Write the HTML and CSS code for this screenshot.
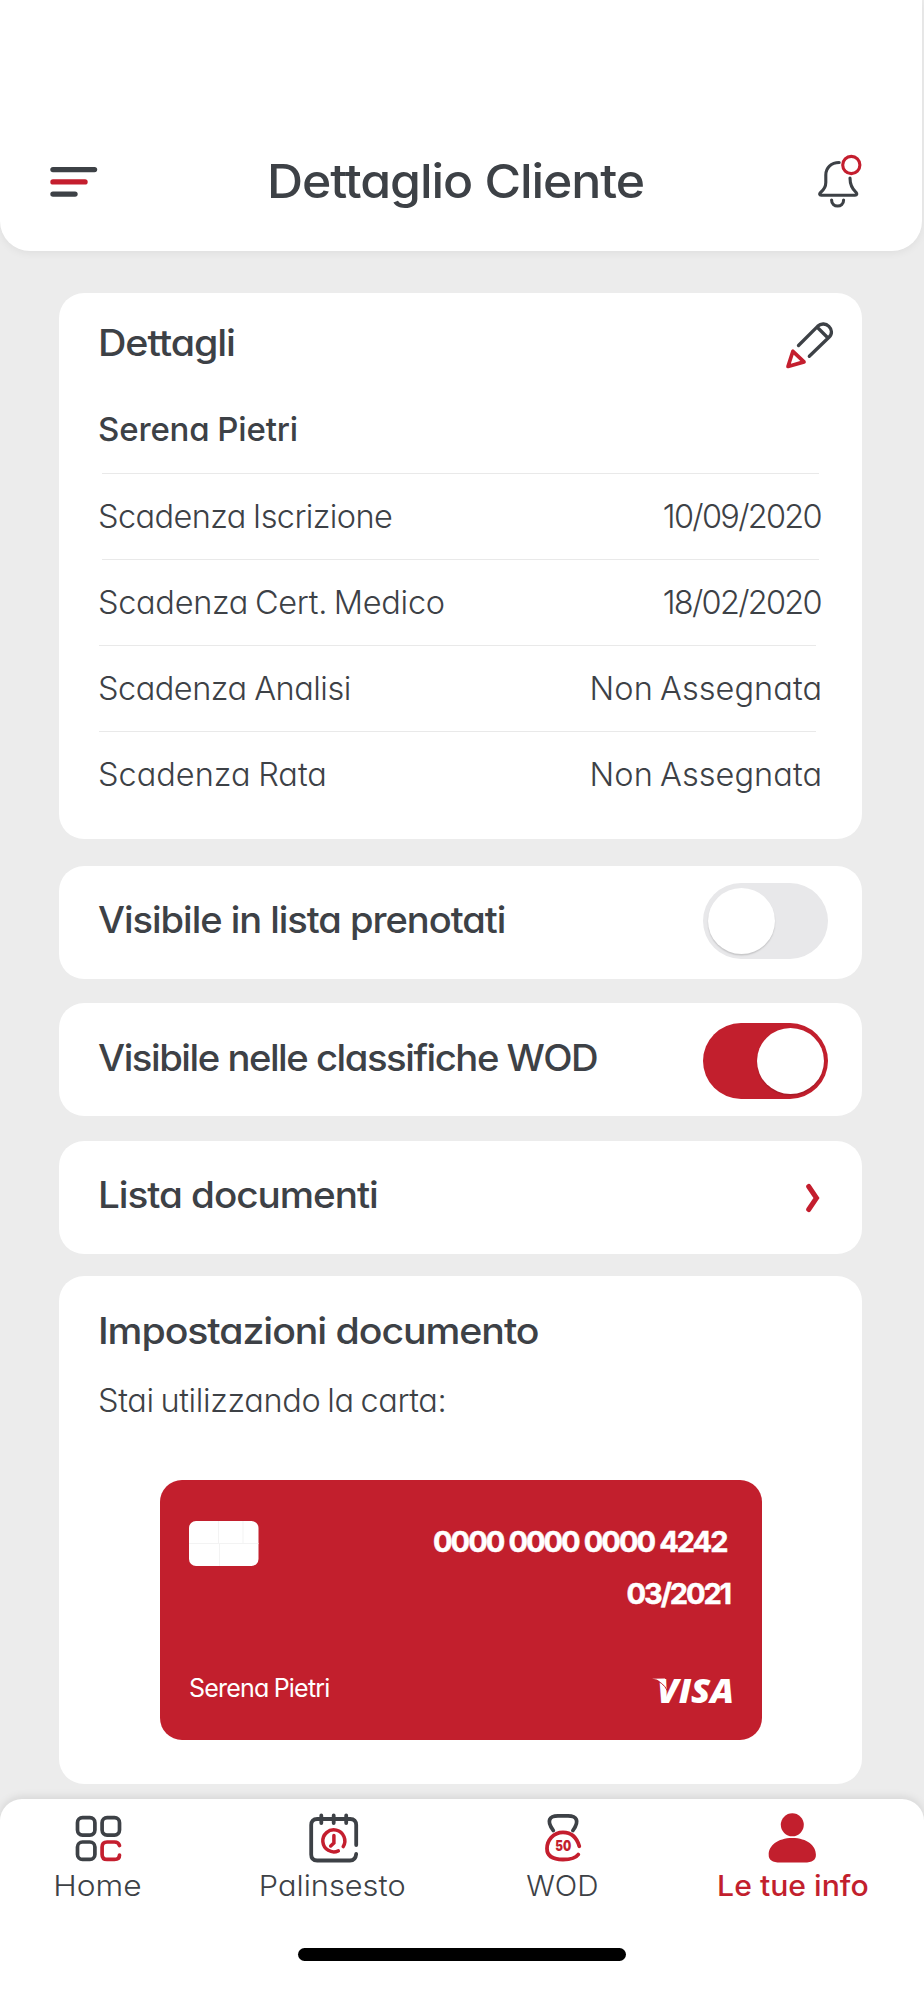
FILE: index.html
```html
<!DOCTYPE html>
<html lang="it">
<head>
<meta charset="utf-8">
<title>Dettaglio Cliente</title>
<link rel="stylesheet" href="styles.css">
</head>
<body>
<div class="screen">
  <header class="topbar">
    <svg class="menu" width="48" height="32" viewBox="0 0 48 32" fill="none" stroke-width="5.4" stroke-linecap="round">
      <path d="M3 4.600H44.5" stroke="#3d4146"/>
      <path d="M3 16.900H35" stroke="#c41e2e"/>
      <path d="M3 29.100H25" stroke="#3d4146"/>
    </svg>
    <h1 class="title"><span class="t-title">Dettaglio Cliente</span></h1>
    <svg class="bell" width="46" height="56" viewBox="0 0 46 56" fill="none" stroke="#3d4146" stroke-width="3.1" stroke-linecap="round" stroke-linejoin="round">
      <path d="M21.2 8.5C13 8.5 7.800 14 7.800 21V28.500C7.800 33.500 5.600 36 2.600 38.500C1 40 1.500 41.300 3.200 41.300H37C39 41.300 39.300 39.800 38 38.300C34.500 35.200 32 32 32 24"/>
      <path d="M13.600 46C13.600 54 25.600 54 25.600 46"/>
      <circle cx="33.300" cy="11" r="8.600" stroke="#c41e2e"/>
    </svg>
  </header>

  <main class="content">
    <section class="card details">
      <div class="details-head">
        <h2 class="heading t-dettagli">Dettagli</h2>
        <svg class="pencil" width="50" height="50" viewBox="0 0 50 50" fill="none" stroke="#3d4146" stroke-width="3.3" stroke-linecap="round" stroke-linejoin="round">
          <path d="M13.500 26.500L32.600 7.300C40 0.200 51.500 11 44 18.300L24.300 37.300M32 8L42.500 18.500"/>
          <path d="M7.900 32.300L3 47.500L19 42.900Z" stroke="#c41e2e" stroke-width="3.700"/>
        </svg>
      </div>
      <div class="row name"><span class="t-name">Serena Pietri</span></div>
      <div class="row"><span class="t-r1">Scadenza Iscrizione</span><span class="t-date">10/09/2020</span></div>
      <div class="row"><span class="t-r2">Scadenza Cert. Medico</span><span class="t-date">18/02/2020</span></div>
      <div class="row"><span class="t-r3">Scadenza Analisi</span><span class="t-na">Non Assegnata</span></div>
      <div class="row"><span class="t-r4">Scadenza Rata</span><span class="t-na">Non Assegnata</span></div>
    </section>

    <section class="card option first">
      <h2 class="heading t-o1">Visibile in lista prenotati</h2>
      <div class="toggle"><div class="knob"></div></div>
    </section>
    <section class="card option">
      <h2 class="heading t-o2">Visibile nelle classifiche WOD</h2>
      <div class="toggle on"><div class="knob"></div></div>
    </section>
    <section class="card option">
      <h2 class="heading t-o3">Lista documenti</h2>
      <svg class="chevron" width="16" height="30" viewBox="0 0 16 30" fill="none" stroke="#c41e2e" stroke-width="5" stroke-linecap="round"><path d="M3.700 3.500L11.500 15L3.700 26.500"/></svg>
    </section>

    <section class="card payment">
      <h2 class="heading t-imp">Impostazioni documento</h2>
      <p class="using"><span class="t-using">Stai utilizzando la carta:</span></p>
      <div class="credit">
        <div class="credit-top">
          <svg class="chip" width="70" height="45" viewBox="0 0 70 45" fill="none" stroke="#f3f3f3"><rect width="69.500" height="45" rx="7" fill="#fff" stroke="none"/><path d="M0 22.500H69.500M29.500 0V22.500M54 0V22.500M30.500 22.500V45"/></svg>
          <div class="numbers">
            <div class="number"><span class="t-num">0000 0000 0000 4242</span></div>
            <div class="expiry"><span class="t-exp">03/2021</span></div>
          </div>
        </div>
        <div class="credit-bottom">
          <span class="holder t-holder">Serena Pietri</span>
          <svg class="visa" width="82" height="28" viewBox="0 0 82 28">
            <text class="visa-text" x="6" y="27.500" textLength="77" lengthAdjust="spacingAndGlyphs">VISA</text>
            <path d="M1 3.700Q11 4 15.500 15.500L14 3.500Z" fill="#fff"/>
            <path d="M2 4.700Q12 6.500 16.500 16" fill="none" stroke="#c21f2d" stroke-width="1"/>
          </svg>
        </div>
      </div>
    </section>
  </main>

  <footer class="tabbar">
    <nav class="tabs">
      <div class="tab w-home">
        <svg class="nudge" width="50" height="50" viewBox="0 0 50 50" fill="none" stroke="#3d4146" stroke-width="3.700" stroke-linecap="round">
          <rect x="4.500" y="4.700" width="17.400" height="17.400" rx="5"/><rect x="29.100" y="4.700" width="17.400" height="17.400" rx="5"/><rect x="4.500" y="29" width="17.400" height="17.400" rx="5"/>
          <path d="M46.500 32.500Q45.500 29 41.500 29H34.100Q29.100 29 29.100 34V41.400Q29.100 46.400 34.100 46.400H41.500Q46.500 46.400 46.500 42" stroke="#c41e2e"/>
        </svg>
        <span class="label t-home">Home</span>
      </div>
      <div class="tab w-pal">
        <svg class="nudge-wide" width="50" height="50" viewBox="0 0 50 50" fill="none" stroke="#3d4146" stroke-width="3.800" stroke-linecap="round">
          <path d="M47.200 32V12Q47.200 6 41.200 6H8.200Q2.200 6 2.200 12V41.500Q2.200 47.500 8.200 47.500H41Q46.500 47.500 47.200 41M12.300 2.500V10M24.700 2.500V10M37.200 2.500V10"/>
          <path d="M34.200 33.600A11 11 0 1 0 29.300 37.900M24.900 22.500V30L21.700 33" stroke="#c41e2e" stroke-width="3.500"/>
        </svg>
        <span class="label t-pal">Palinsesto</span>
      </div>
      <div class="tab w-wod">
        <svg class="nudge" width="50" height="50" viewBox="0 0 50 50" fill="none" stroke="#3d4146" stroke-width="3.800" stroke-linecap="round">
          <path d="M15.300 17.500C8 7.500 11.500 2.900 20 2.900H30C38.500 2.900 42 7.500 34.900 17.500"/>
          <path d="M41.300 33.200C38.500 23.500 33 19.300 25 19.300C15 19.300 9 28 9 35.500C9 43 15 46.500 25 46.500C33 46.500 38 44.800 40.300 41.500" stroke="#c41e2e"/>
          <text class="kettle" x="25.300" y="38" text-anchor="middle" textLength="16" lengthAdjust="spacingAndGlyphs">50</text>
        </svg>
        <span class="label t-wod">WOD</span>
      </div>
      <div class="tab w-info">
        <svg width="50" height="50" viewBox="0 0 50 50" fill="#c21f2d">
          <circle cx="24.300" cy="11.800" r="11.500"/>
          <path d="M0.700 41.500C0.700 33 9.300 25 24.300 25S47.900 33 47.900 41.500Q48.300 49.500 36.300 49.500H12.300Q0.300 49.500 0.700 41.500Z"/>
        </svg>
        <span class="label active t-info">Le tue info</span>
      </div>
    </nav>
    <div class="home-indicator"></div>
  </footer>
</div>
</body>
</html>
```
FILE: styles.css
```css
* { box-sizing: border-box; }
body {
  margin: 0;
  background: #ececec;
  color: #3d4146;
  font-family: Inter, "Open Sans", sans-serif;
  font-feature-settings: "cv11";
}
h1, h2, p { margin: 0; }
svg { display: block; flex: none; overflow: visible; }

.screen {
  width: 924px;
  height: 2000px;
  overflow: hidden;
  display: flex;
  flex-direction: column;
}

.topbar {
  width: 922px;
  height: 251px;
  flex: none;
  padding: 149px 58px 38px 50px;
  display: flex;
  align-items: center;
  background: #fff;
  border-radius: 0 0 30px 30px;
  box-shadow: 0 2px 8px rgba(0, 0, 0, .06);
}
.title {
  flex: 1;
  padding-left: 169px;
  font-size: 47px;
  line-height: 64px;
  font-weight: 500;
  white-space: nowrap;
}
.title span { display: inline-block; }
.bell { margin-top: 2px; }

.content {
  flex: none;
  height: 1548px;
  padding: 41.500px 62px 0 59px;
}
.card {
  background: #fff;
  border-radius: 25px;
  padding: 0 34px 0 39px;
}
.heading {
  font-size: 36.500px;
  font-weight: 500;
  line-height: 46px;
  letter-spacing: -1px;
  white-space: nowrap;
  transform-origin: 0 50%;
}

.details { height: 546px; padding: 6px 41px 0 39px; }
.details-head {
  height: 88.500px;
  display: flex;
  align-items: center;
  justify-content: space-between;
}
.pencil { margin: 3px -14px 0 0; }
.row {
  height: 86px;
  display: flex;
  align-items: center;
  justify-content: space-between;
  font-size: 32.500px;
  font-weight: 300;
  white-space: nowrap;
  background: linear-gradient(#e9e9e9, #e9e9e9) 4px 100% / 717px 1px no-repeat;
}
.row:nth-child(4), .row:nth-child(5) { background-position: 1px 100%; }
.row:last-child { background: none; }
.row.name { height: 87px; margin-bottom: -.5px; padding-bottom: 3px; font-size: 33px; font-weight: 500; background-position: 4px 100%; }

.option {
  height: 113px;
  margin-top: 24.700px;
  display: flex;
  align-items: center;
  justify-content: space-between;
  padding-bottom: 4px;
}
.option.first { margin-top: 27px; }
.toggle {
  width: 125px;
  height: 76px;
  padding: 5.500px 4.500px;
  display: flex;
  border-radius: 38px;
  background: #e8e8ea;
}
.option.first .toggle { margin-top: 1px; }
.toggle.on { justify-content: flex-end; background: #c21f2d; margin-top: 6px; }
.knob {
  width: 67px;
  height: 66px;
  border-radius: 50%;
  background: #fff;
  box-shadow: 0 1.500px 1.500px rgba(0, 0, 0, .15);
}
.chevron { margin: 5px 7px 0 0; }

.payment { height: 508px; margin-top: 22.500px; padding-top: 31.500px; }
.using {
  margin-top: 24px;
  font-size: 32.500px;
  line-height: 46px;
  font-weight: 300;
  white-space: nowrap;
}
.credit {
  width: 602px;
  height: 260px;
  margin: 56px 0 0 62px;
  padding: 41px 29px 37px;
  display: flex;
  flex-direction: column;
  justify-content: space-between;
  border-radius: 22px;
  background: #c21f2d;
  color: #fff;
}
.credit-top, .credit-bottom { display: flex; justify-content: space-between; }
.credit-bottom { align-items: flex-end; }
.numbers {
  font-size: 29px;
  font-weight: 700;
  line-height: 52px;
  margin-top: -4.500px;
  text-align: right;
  white-space: nowrap;
  -webkit-text-stroke: .5px #fff;
}
.number { padding-right: 6.500px; }
.expiry { padding-right: 3px; }
.holder { font-size: 25px; line-height: 30px; }
.visa-text { font: italic 800 34px "Open Sans", sans-serif; fill: #fff; }

.tabbar {
  height: 201px;
  flex: none;
  padding: 14px 56px 0 55px;
  background: #fff;
  border-radius: 22px 22px 0 0;
  box-shadow: 0 -2px 8px rgba(0, 0, 0, .1);
}
.tabs { display: flex; justify-content: space-between; }
.tab { display: flex; flex-direction: column; align-items: center; }
.nudge { margin-left: 2px; }
.nudge-wide { margin-left: 4px; }
.w-home { width: 84px; }
.w-pal { width: 146px; }
.w-wod { width: 72px; margin-left: 1px; }
.w-info { width: 150px; }
.label {
  font-size: 29px;
  font-weight: 300;
  line-height: 45px;
  white-space: nowrap;
}
.label.active { color: #c21f2d; font-weight: 500; }
.kettle { font: 900 14.500px Inter, sans-serif; fill: #c21f2d; stroke: none; }
.home-indicator {
  width: 328px;
  height: 13px;
  margin: 40px 0 0 243px;
  border-radius: 7px;
  background: #000;
}

/* width and tracking per string */
.t-title { letter-spacing: -1px; transform: scaleX(1.063); transform-origin: 0 50%; }
.t-dettagli { transform: scaleX(1.080); }
.t-o1 { transform: scaleX(1.044); }
.t-o2 { letter-spacing: -1.400px; transform: scaleX(1.048); }
.t-o3 { transform: scaleX(1.060); }
.t-imp { transform: scaleX(1.076); }
.t-name { letter-spacing: -.15px; word-spacing: -1px; }
.t-r1 { letter-spacing: -.6px; word-spacing: -1.500px; }
.t-r2 { letter-spacing: -.3px; word-spacing: -2px; }
.t-r3 { letter-spacing: -.5px; word-spacing: -1px; }
.t-r4 { letter-spacing: 0; word-spacing: -1.500px; }
.t-date { letter-spacing: -1.700px; }
.t-na { letter-spacing: .05px; word-spacing: -2px; margin-right: -1px; }
.t-using { letter-spacing: -.36px; word-spacing: -2px; }
.t-num { letter-spacing: -2px; word-spacing: .3px; }
.t-exp { letter-spacing: -2.100px; }
.t-holder { letter-spacing: -.8px; word-spacing: -1px; }
.t-home { transform: scaleX(1.095); }
.t-pal { transform: scaleX(1.060); }
.t-wod { transform: scaleX(1.020); }
.t-info { transform: scaleX(1.040); }
```
